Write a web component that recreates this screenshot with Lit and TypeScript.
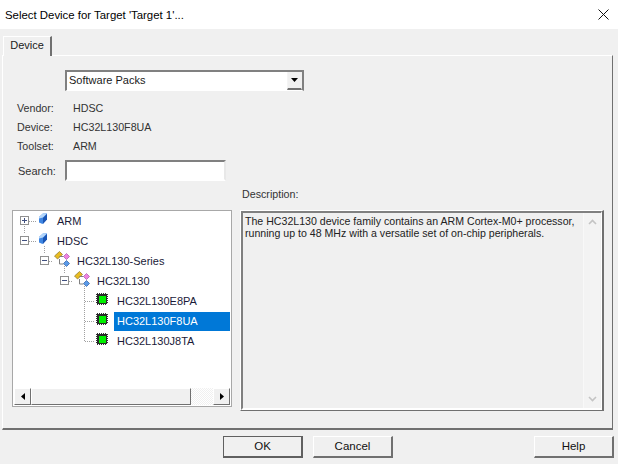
import { LitElement, html, css, svg } from "lit";
import { customElement } from "lit/decorators.js";

const cube = svg`<svg width="20" height="20" viewBox="0 0 20 20"><path d="M5 6 9.5 2 13 2.5V8l-4.500 5L5 11.500z" fill="#3f86e2"/><path d="M5 6 9.500 2 13 2.500 9 6.500 5 7.500z" fill="#b4d6fb"/><path d="M9 7v6l4-4.500V3z" fill="#1a55b4"/></svg>`;
const group = svg`<svg width="20" height="20" viewBox="0 0 20 20"><path d="M0.5 5 5.500.5 8.500 3.500 3.500 8z" fill="#e8bc20" stroke="#8a7428" stroke-width=".7"/><path d="M9.500 5.500l3-3 3 3-3 3z" fill="#ee82e0" stroke="#a858a8" stroke-width=".7"/><path d="M9.500 12.500l3-3 3 3-3 3z" fill="#5a9ae8" stroke="#2a5aa0" stroke-width=".7"/><path d="M5.500 8v5h4M5.500 5.500h4" stroke="#808080" fill="none"/></svg>`;
const chip = svg`<svg width="20" height="20" viewBox="0 0 20 20"><rect x="3" y="3" width="10" height="10" fill="#2a2a2a"/><path d="M2.500 3v10M13.500 3v10M3 2.500h10M3 13.500h10" stroke="#333" stroke-dasharray="1 1"/><rect x="5" y="5" width="7" height="7" fill="#00f000"/></svg>`;

interface Node { label: string; depth: number; icon: unknown; exp?: "+" | "-"; sel?: boolean }

const nodes: Node[] = [
  { label: "ARM", depth: 0, icon: cube, exp: "+" },
  { label: "HDSC", depth: 0, icon: cube, exp: "-" },
  { label: "HC32L130-Series", depth: 1, icon: group, exp: "-" },
  { label: "HC32L130", depth: 2, icon: group, exp: "-" },
  { label: "HC32L130E8PA", depth: 3, icon: chip },
  { label: "HC32L130F8UA", depth: 3, icon: chip, sel: true },
  { label: "HC32L130J8TA", depth: 3, icon: chip },
];

@customElement("app-root")
export class AppRoot extends LitElement {
  static styles = css`
    :host { display: block; width: 618px; height: 464px; background: #f0f0f0; overflow: hidden;
      font: 12px "Segoe UI", "Liberation Sans", Arial, sans-serif; color: #1a1a1a; }
    .title { height: 29px; background: #fff; display: flex; align-items: center; justify-content: space-between;
      padding: 0 9px 0 5px; box-sizing: border-box; font-size: 11.4px; color: #000; }
    .title svg { display: block; margin-top: -1px; }
    .tabs { height: 26px; box-sizing: border-box; padding: 7px 0 0 3px; display: flex; align-items: flex-end; }
    .tab { position: relative; z-index: 1; width: 49px; height: 20px; box-sizing: border-box; margin-bottom: -1px; background: #f0f0f0;
      border-top: 1px solid #fff; border-left: 1px solid #fff; border-right: 2px solid #707070;
      font-size: 11px; text-align: center; line-height: 17px; }
    .panel { margin-left: 2px; width: 611px; height: 375px; box-sizing: border-box; border: 1px solid #fff;
      border-right: 1px solid #707070; border-bottom: 2px solid #707070; border-top-color: #fff;
      padding: 14px 8px 0 9px; }
    .combo { margin-left: 53px; width: 239px; height: 21px; box-sizing: border-box; background: #fff;
      border: 2px solid #808080; border-bottom: 1px solid #fff; display: flex; font-size: 11px; padding-left: 2px; align-items: flex-start; justify-content: space-between; line-height: 17px; }
    .combo .btn { width: 15px; height: 18px; background: #f0f0f0; box-sizing: border-box; border-right: 1px solid #f0f0f0; border-bottom: 2px solid #707070; border-left: 1px solid #f4f4f4; display: flex; align-items: center; justify-content: center; }
    .info { margin-top: 7px; display: grid; grid-template-columns: 56px auto; grid-auto-rows: 19.3px; align-items: center; font-size: 10.7px; color: #333; padding-left: 5px; }
    .search { display: flex; align-items: center; margin-top: 4px; font-size: 11px; padding-left: 6px; color: #333; }
    .search label { width: 47px; padding-top: 2px; }
    .search .inp { width: 161px; height: 21px; box-sizing: border-box; background: #fff; border: 2px solid #808080; border-right-color: #e8e8e8; border-bottom-color: #fff; }
    .desc-label { margin: 7px 0 0 230px; height: 16px; line-height: 13px; font-size: 10.7px; color: #333; }
    .lower { display: flex; margin-top: 6px; align-items: flex-start; }
    .tree { position: relative; width: 220px; height: 197px; box-sizing: border-box; border: 1px solid #a8a8a8; background: #fff; display: flex; flex-direction: column; }
    .rows { flex: 1; }
    .row { display: flex; height: 20px; align-items: center; font-size: 11px; color: #1a1a38; box-sizing: border-box; }
    .slot { width: 14px; flex: none; display: flex; }
    .icon { width: 20px; height: 20px; flex: none; }
    .icon svg { display: block; }
    .exp { width: 9px; height: 9px; box-sizing: border-box; border: 1px solid #909090; background: #fff; position: relative; }
    .exp::before { content: ""; position: absolute; left: 1px; top: 3px; width: 5px; height: 1px; background: #405080; }
    .exp.plus::after { content: ""; position: absolute; left: 3px; top: 1px; width: 1px; height: 5px; background: #405080; }
    .lbl { padding: 0 3px; height: 20px; line-height: 20px; box-sizing: border-box; }
    .lbl.sel { flex: 1; background: #0078d7; color: #fff; margin-right: 1px; border-top: 1px solid #fff; line-height: 19px; }
    .lines { position: absolute; left: 0; top: 0; pointer-events: none; }
    .hbar { height: 17px; margin: 0 1px 1px 1px; display: flex; flex: none; }
    .sb { box-sizing: border-box; height: 17px; background: #f0f0f0; border-top: 1px solid #fff; border-left: 1px solid #fff; border-right: 1px solid #707070; border-bottom: 1px solid #707070; display: flex; align-items: center; justify-content: center; }
    .sb.end { width: 17px; flex: none; }
    .thumb { width: 160px; flex: none; }
    .track { flex: 1; background-image: repeating-conic-gradient(#f0f0f0 0 25%, #fff 0 50%); background-size: 2px 2px; }
    .desc { margin-left: 8px; width: 364px; height: 201px; box-sizing: border-box; border: 1px solid #fff; border-right: 2px solid #707070; border-bottom: 1px solid #707070; background: #f0f0f0; }
    .desc-in { height: 100%; box-sizing: border-box; border: 2px solid #808080; border-right: 1px solid #fff; border-bottom: 2px solid #fff; display: flex; }
    .desc-text { flex: 1; padding: 2px 0 0 2px; font-size: 10.6px; line-height: 12px; color: #222; white-space: nowrap; }
    .vbar { width: 17px; display: flex; flex-direction: column; justify-content: space-between; align-items: center; padding: 6px 0; box-sizing: border-box; background: #f3f3f3; border-left: 1px solid #f8f8f8; margin-right: 1px; }
    .foot { display: flex; padding: 6px 4px 0 223px; }
    button { width: 80px; height: 22px; box-sizing: border-box; font: inherit; font-size: 11.5px; color: #111; background: #f0f0f0; padding: 0 0 2px;
      border-top: 1px solid #fff; border-left: 1px solid #fff; border-right: 2px solid #707070; border-bottom: 2px solid #707070; }
    button.def { border: 1px solid #606060; border-right-width: 2px; border-bottom-width: 2px; }
    button + button { margin-left: 10px; }
    button.help { margin-left: auto; }
  `;

  private row(n: Node) {
    return html`<div class="row" style="padding-left:${7 + 20 * n.depth}px">
      <span class="slot">${n.exp ? html`<span class="exp ${n.exp === "+" ? "plus" : ""}"></span>` : ""}</span>
      <span class="icon">${n.icon}</span>
      <span class="lbl ${n.sel ? "sel" : ""}">${n.label}</span>
    </div>`;
  }

  render() {
    return html`
      <div class="title"><span>Select Device for Target 'Target 1'...</span>
        <svg width="11" height="11" viewBox="0 0 11 11"><path d="M.5.5l10 10M10.500.5l-10 10" stroke="#111" fill="none"/></svg></div>
      <div class="tabs"><div class="tab">Device</div></div>
      <div class="panel">
        <div class="combo"><span>Software Packs</span><span class="btn"><svg width="7" height="4" viewBox="0 0 7 4"><path d="M0 0h7L3.500 4z" fill="#000"/></svg></span></div>
        <div class="info"><span>Vendor:</span><span>HDSC</span><span>Device:</span><span>HC32L130F8UA</span><span>Toolset:</span><span>ARM</span></div>
        <div class="search"><label>Search:</label><div class="inp"></div></div>
        <div class="desc-label">Description:</div>
        <div class="lower">
          <div class="tree">
            <div class="rows">${nodes.map((n) => this.row(n))}</div>
            <div class="hbar">
              <div class="sb end"><svg width="4" height="7" viewBox="0 0 4 7"><path d="M4 0v7L0 3.500z" fill="#000"/></svg></div>
              <div class="sb thumb"></div>
              <div class="track"></div>
              <div class="sb end"><svg width="4" height="7" viewBox="0 0 4 7"><path d="M0 0v7l4-3.500z" fill="#000"/></svg></div>
            </div>
            <svg class="lines" width="218" height="180" viewBox="0 0 218 180" fill="none" stroke="#a0a0a0" stroke-dasharray="1 1">
              <path d="M16 10.500h8M11.500 15v8M16 30.500h8M31.500 35v8M36 50.500h4M51.500 55v8M56 70.500h4M71.500 75v56M72 90.500h10M72 110.500h10M72 130.500h10"/>
            </svg>
          </div>
          <div class="desc"><div class="desc-in">
            <div class="desc-text">The HC32L130 device family contains an ARM Cortex-M0+ processor,<br>running up to 48 MHz with a versatile set of on-chip peripherals.</div>
            <div class="vbar">
              <svg width="9" height="6" viewBox="0 0 9 6"><path d="M1 5l3.500-3.500L8 5" stroke="#c4c4c4" stroke-width="1.600" fill="none"/></svg>
              <svg width="9" height="6" viewBox="0 0 9 6"><path d="M1 1l3.500 3.500L8 1" stroke="#c4c4c4" stroke-width="1.600" fill="none"/></svg>
            </div>
          </div></div>
        </div>
      </div>
      <div class="foot"><button class="def">OK</button><button>Cancel</button><button class="help">Help</button></div>
    `;
  }
}
